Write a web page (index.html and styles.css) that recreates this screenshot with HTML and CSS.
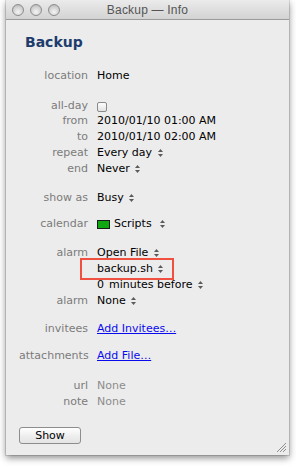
FILE: index.html
```html
<!DOCTYPE html>
<html>
<head>
<meta charset="utf-8">
<link rel="stylesheet" href="styles.css">
</head>
<body>
<div class="window">
  <div class="titlebar">
    <div class="lights"><span class="light"></span><span class="light"></span><span class="light"></span></div>
    <div class="title">Backup — Info</div>
  </div>
  <div class="content">
    <h1 class="heading">Backup</h1>

    <div class="row g-location"><span class="lbl">location</span><span class="val">Home</span></div>

    <div class="row short g-allday"><span class="lbl">all-day</span><span class="val"><span class="check"></span></span></div>
    <div class="row"><span class="lbl">from</span><span class="val">2010/01/10 01:00 AM</span></div>
    <div class="row"><span class="lbl">to</span><span class="val">2010/01/10 02:00 AM</span></div>
    <div class="row"><span class="lbl">repeat</span><span class="val">Every day <svg class="step" viewBox="0 0 5 10"><polygon points="0,4 2.5,1 5,4"/><polygon points="0,6 2.5,9 5,6"/></svg></span></div>
    <div class="row"><span class="lbl">end</span><span class="val">Never <svg class="step" viewBox="0 0 5 10"><polygon points="0,4 2.5,1 5,4"/><polygon points="0,6 2.5,9 5,6"/></svg></span></div>

    <div class="row g-show"><span class="lbl">show as</span><span class="val">Busy <svg class="step" viewBox="0 0 5 10"><polygon points="0,4 2.5,1 5,4"/><polygon points="0,6 2.5,9 5,6"/></svg></span></div>

    <div class="row g-cal"><span class="lbl">calendar</span><span class="val"><span class="swatch"></span><span class="calname">Scripts</span><svg class="step wide" viewBox="0 0 5 10"><polygon points="0,4 2.5,1 5,4"/><polygon points="0,6 2.5,9 5,6"/></svg></span></div>

    <div class="row g-alarm"><span class="lbl">alarm</span><span class="val">Open File <svg class="step" viewBox="0 0 5 10"><polygon points="0,4 2.5,1 5,4"/><polygon points="0,6 2.5,9 5,6"/></svg></span></div>
    <div class="row"><span class="lbl"></span><span class="val boxed">backup.sh <svg class="step" viewBox="0 0 5 10"><polygon points="0,4 2.5,1 5,4"/><polygon points="0,6 2.5,9 5,6"/></svg><span class="highlight"></span></span></div>
    <div class="row"><span class="lbl"></span><span class="val"><span class="num">0</span>minutes before <svg class="step" viewBox="0 0 5 10"><polygon points="0,4 2.5,1 5,4"/><polygon points="0,6 2.5,9 5,6"/></svg></span></div>
    <div class="row"><span class="lbl">alarm</span><span class="val">None <svg class="step" viewBox="0 0 5 10"><polygon points="0,4 2.5,1 5,4"/><polygon points="0,6 2.5,9 5,6"/></svg></span></div>

    <div class="row g-inv"><span class="lbl">invitees</span><span class="val"><a class="link" href="#">Add Invitees…</a></span></div>
    <div class="row g-att"><span class="lbl">attachments</span><span class="val"><a class="link" href="#">Add File…</a></span></div>

    <div class="row g-url"><span class="lbl">url</span><span class="val muted">None</span></div>
    <div class="row"><span class="lbl">note</span><span class="val muted">None</span></div>

    <button class="btn">Show</button>
  </div>
  <svg class="grip" viewBox="0 0 11 11"><path d="M1 10 L10 1 M4 10 L10 4 M7 10 L10 7"/></svg>
</div>
</body>
</html>
```
FILE: styles.css
```css
html, body {
  margin: 0;
  padding: 0;
  background: #ffffff;
}
body {
  width: 296px;
  height: 467px;
  overflow: hidden;
  font-family: "DejaVu Sans", sans-serif;
  font-size: 11px;
  color: #000;
}
.window {
  position: relative;
  margin-left: 6px;
  width: 283px;
  height: 455px;
  background: #ececec;
  box-shadow: 0 3px 7px rgba(0,0,0,0.45), 0 0 0 1px rgba(0,0,0,0.12);
  overflow: hidden;
}
.titlebar {
  height: 19px;
  border-bottom: 1px solid #9b9b9b;
  background: linear-gradient(#ebebeb, #d3d3d3);
  display: flex;
  align-items: center;
  position: relative;
}
.lights {
  display: flex;
  gap: 6px;
  padding-left: 6px;
  position: relative;
  z-index: 1;
}
.light {
  display: block;
  width: 12px;
  height: 12px;
  border-radius: 50%;
  border: 1px solid #8e8e8e;
  background: radial-gradient(circle at 50% 70%, #f4f4f4 0%, #cfcfcf 60%, #a9a9a9 100%);
  box-sizing: border-box;
}
.title {
  position: absolute;
  left: 0;
  right: 0;
  top: 0;
  height: 19px;
  line-height: 20px;
  text-align: center;
  font-family: "Liberation Sans", sans-serif;
  font-size: 12px;
  color: #555555;
  letter-spacing: 0.2px;
}
.content {
  padding: 14px 0 0 13px;
}
.heading {
  margin: 0 0 0 6px;
  font-size: 14px;
  line-height: 17px;
  font-weight: bold;
  color: #1d3c6c;
}
.row {
  display: flex;
  height: 16px;
  line-height: 16px;
}
.row.short {
  height: 14px;
  line-height: 14px;
}
.lbl {
  flex: none;
  width: 69px;
  text-align: right;
  color: #7b7b7b;
}
.val {
  margin-left: 9px;
  display: flex;
  align-items: center;
  white-space: pre;
}
.g-location { margin-top: 17px; }
.g-allday { margin-top: 15px; }
.g-show { margin-top: 13px; }
.g-cal { margin-top: 10px; }
.g-alarm { margin-top: 13px; }
.g-inv { margin-top: 12px; }
.g-att { margin-top: 11px; }
.g-url { margin-top: 14px; }

.step {
  width: 5px;
  height: 10px;
  margin-left: 2px;
  fill: #5a5a5a;
}
.step.wide { margin-left: 8px; }
.check {
  width: 8px;
  height: 8px;
  border: 1px solid #8a8a8a;
  border-radius: 2px;
  background: linear-gradient(#fdfdfd, #e2e2e2);
  margin-top: 1px;
}
.swatch {
  width: 11px;
  height: 7px;
  border: 1px solid #1a1a1a;
  background: #10a810;
  margin-right: 4px;
}
.num {
  margin-right: 5px;
}
.boxed {
  position: relative;
}
.highlight {
  position: absolute;
  left: -17px;
  top: -3px;
  width: 90px;
  height: 18px;
  border: 2px solid #f0503f;
}
.link {
  color: #0a0aee;
  text-decoration: underline;
}
.muted {
  color: #8c8c8c;
}
.btn {
  margin-top: 17px;
  margin-left: 0;
  width: 62px;
  height: 17px;
  padding: 0;
  border: 1px solid #8d8d8d;
  border-radius: 3px;
  background: linear-gradient(#ffffff, #ececec 60%, #e4e4e4);
  font-family: "DejaVu Sans", sans-serif;
  font-size: 11px;
  line-height: 15px;
  color: #000;
}
.grip {
  position: absolute;
  right: 2px;
  bottom: 2px;
  width: 11px;
  height: 11px;
  stroke: #8f8f8f;
  stroke-width: 1;
  fill: none;
}
```
